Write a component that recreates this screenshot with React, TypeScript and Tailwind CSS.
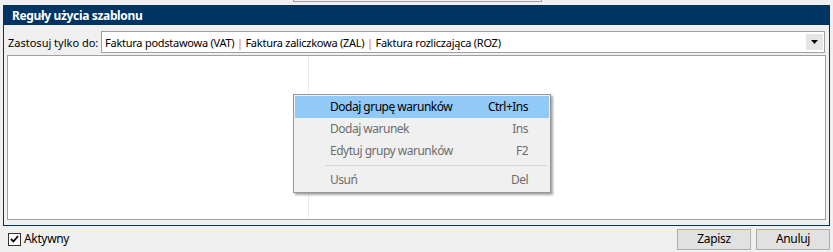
import React from "react";

const Pipe = () => <span className="text-[#d97a00]">|</span>;

function MenuItem({ label, shortcut, active, disabled }: { label: string; shortcut: string; active?: boolean; disabled?: boolean }) {
  return (
    <div
      className={`flex h-[22px] items-center pl-[35px] pr-[21px] ${active ? "bg-[#91c9f7] text-black" : ""} ${disabled ? "text-[#6d6d6d]" : "text-black"}`}
    >
      <span className="flex-1">{label}</span>
      <span>{shortcut}</span>
    </div>
  );
}

export default function App() {
  return (
    <div
      className="relative h-[252px] w-[833px] overflow-hidden bg-[#f0f0f0] text-[11px] leading-none tracking-[-0.25px] text-black"
      style={{ fontFamily: '"Noto Sans", "Liberation Sans", sans-serif' }}
    >
      {/* top fragment */}
      <div className="h-[5px]">
        <div className="ml-[293px] h-[2px] w-[249px] border-x border-b border-[#a0a0a0]" />
      </div>

      {/* panel */}
      <div className="mx-[3px] flex h-[221px] flex-col border border-[#003463]">
        <div className="flex h-[19px] items-center bg-[#003463] pl-[8px] text-[12px] font-bold tracking-[-0.35px] text-white">
          Reguły użycia szablonu
        </div>
        <div className="mt-[6px] flex items-center pl-[4px] pr-[4px]">
          <span className="w-[93px] whitespace-nowrap tracking-[0px]">Zastosuj tylko do:</span>
          <div className="flex h-[22px] flex-1 items-center border border-[#a0a0a0] bg-white pl-[3px] pr-[1px]">
            <span className="flex-1 whitespace-nowrap">
              Faktura podstawowa (VAT) <Pipe /> Faktura zaliczkowa (ZAL) <Pipe /> Faktura rozliczająca (ROZ)
            </span>
            <div className="flex h-[16px] w-[17px] items-center justify-center bg-[#e5e5e5]">
              <svg width="7" height="4" viewBox="0 0 7 4">
                <path d="M0 0H7L3.5 4Z" fill="#000" />
              </svg>
            </div>
          </div>
        </div>
        <div className="mx-[3px] mt-[2px] flex h-[165px] border border-[#a0a0a0] bg-white">
          <div className="w-[301px] border-r border-[#ececec]" />
        </div>
      </div>

      {/* bottom bar */}
      <div className="flex h-[26px] items-center pl-[8px] pr-[3px]">
        <div className="flex items-center gap-[3px]">
          <div className="flex h-[13px] w-[13px] items-center justify-center border border-[#333] bg-white">
            <svg width="9" height="8" viewBox="0 0 9 8">
              <path d="M1 4L3.5 6.5L8 1" stroke="#000" strokeWidth="1.8" fill="none" />
            </svg>
          </div>
          <span className="text-[12px] tracking-[-0.35px]">Aktywny</span>
        </div>
        <div className="ml-auto flex gap-[5px]">
          <button className="h-[21px] w-[74px] border border-[#adadad] bg-[#e1e1e1] text-[12px] tracking-[-0.35px]">Zapisz</button>
          <button className="h-[21px] w-[74px] border border-[#adadad] bg-[#e1e1e1] text-[12px] tracking-[-0.35px]">Anuluj</button>
        </div>
      </div>

      {/* context menu */}
      <div className="absolute left-[293px] top-[94px] w-[258px] border border-[#979797] bg-[#f0f0f0] p-[1px] text-[12px] tracking-[-0.5px] shadow-[2px_2px_2px_rgba(0,0,0,0.35)]">
        <MenuItem label="Dodaj grupę warunków" shortcut="Ctrl+Ins" active />
        <MenuItem label="Dodaj warunek" shortcut="Ins" disabled />
        <MenuItem label="Edytuj grupy warunków" shortcut="F2" disabled />
        <div className="flex h-[7px] items-center pl-[30px] pr-[2px]">
          <div className="h-[1px] flex-1 bg-[#d7d7d7]" />
        </div>
        <MenuItem label="Usuń" shortcut="Del" disabled />
      </div>
    </div>
  );
}
